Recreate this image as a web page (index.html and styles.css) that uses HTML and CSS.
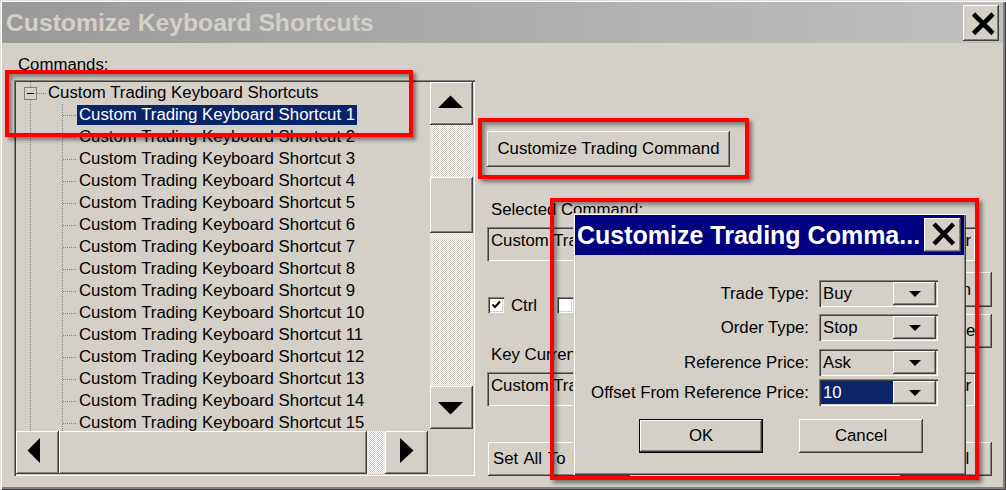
FILE: index.html
```html
<!DOCTYPE html>
<html>
<head>
<meta charset="utf-8">
<title>Customize Keyboard Shortcuts</title>
<link rel="stylesheet" href="styles.css">
</head>
<body>
<div class="window">
  <div class="titlebar">
    <span class="title">Customize Keyboard Shortcuts</span>
    <div class="xbtn main-x"><svg width="36" height="36" viewBox="0 0 36 36"><path d="M10.5 9 L30 28.5 M30 9 L10.5 28.5" stroke="#000" stroke-width="4.6"/></svg></div>
  </div>
  <div class="body">
    <div class="left">
      <div class="lbl cmd-lbl">Commands:</div>
      <div class="tree">
        <div class="tree-view">
          <div class="node root"><span class="exp"><span class="minus"></span></span><span class="hl"></span><span class="txt">Custom Trading Keyboard Shortcuts</span></div>
          <div class="children">
            <div class="node"><span class="hl"></span><span class="txt sel">Custom Trading Keyboard Shortcut 1</span></div>
            <div class="node"><span class="hl"></span><span class="txt">Custom Trading Keyboard Shortcut 2</span></div>
            <div class="node"><span class="hl"></span><span class="txt">Custom Trading Keyboard Shortcut 3</span></div>
            <div class="node"><span class="hl"></span><span class="txt">Custom Trading Keyboard Shortcut 4</span></div>
            <div class="node"><span class="hl"></span><span class="txt">Custom Trading Keyboard Shortcut 5</span></div>
            <div class="node"><span class="hl"></span><span class="txt">Custom Trading Keyboard Shortcut 6</span></div>
            <div class="node"><span class="hl"></span><span class="txt">Custom Trading Keyboard Shortcut 7</span></div>
            <div class="node"><span class="hl"></span><span class="txt">Custom Trading Keyboard Shortcut 8</span></div>
            <div class="node"><span class="hl"></span><span class="txt">Custom Trading Keyboard Shortcut 9</span></div>
            <div class="node"><span class="hl"></span><span class="txt">Custom Trading Keyboard Shortcut 10</span></div>
            <div class="node"><span class="hl"></span><span class="txt">Custom Trading Keyboard Shortcut 11</span></div>
            <div class="node"><span class="hl"></span><span class="txt">Custom Trading Keyboard Shortcut 12</span></div>
            <div class="node"><span class="hl"></span><span class="txt">Custom Trading Keyboard Shortcut 13</span></div>
            <div class="node"><span class="hl"></span><span class="txt">Custom Trading Keyboard Shortcut 14</span></div>
            <div class="node"><span class="hl"></span><span class="txt">Custom Trading Keyboard Shortcut 15</span></div>
          </div>
        </div>
        <div class="vscroll">
          <div class="sbtn"><svg width="43" height="43" viewBox="0 0 43 43"><polygon points="8,26 33,26 20.5,13.5" fill="#000"/></svg></div>
          <div class="track vt1"></div>
          <div class="thumb vthumb"></div>
          <div class="track vt2"></div>
          <div class="sbtn"><svg width="43" height="43" viewBox="0 0 43 43"><polygon points="8,16 33,16 20.5,28.5" fill="#000"/></svg></div>
        </div>
        <div class="hscroll">
          <div class="sbtn"><svg width="43" height="43" viewBox="0 0 43 43"><polygon points="24,7 24,32 11.5,19.5" fill="#000"/></svg></div>
          <div class="thumb hthumb"></div>
          <div class="track ht"></div>
          <div class="sbtn"><svg width="43" height="43" viewBox="0 0 43 43"><polygon points="15,7 15,32 28.5,19.5" fill="#000"/></svg></div>
        </div>
        <div class="corner"></div>
      </div>
    </div>
    <div class="right">
      <div class="btn cmd-btn">Customize Trading Command</div>
      <div class="lbl sel-lbl">Selected Command:</div>
      <div class="textbox"><span>Custom Trading Keyboard Shortcut 1</span><span>Toolbar</span></div>
      <div class="mods">
        <div class="checks">
          <span class="chk"><svg width="12" height="12" viewBox="0 0 12 12"><path d="M2.5 5.5 L5 8 L10 2.5" stroke="#000" stroke-width="2" fill="none"/></svg></span>
          <span class="chk-lbl">Ctrl</span>
          <span class="chk"></span>
          <span class="chk-lbl">Shift</span>
        </div>
        <div class="side-btns">
          <div class="btn side-btn b1">Assign</div>
          <div class="btn side-btn b2">Remove</div>
        </div>
      </div>
      <div class="lbl key-lbl">Key Currently Assigned To:</div>
      <div class="textbox"><span>Custom Trading Keyboard Shortcut 1</span><span>Toolbar</span></div>
      <div class="bottom-row">
        <div class="btn setall">Set All To Default</div>
        <div class="btn side-btn b3">Cancel</div>
      </div>
    </div>
  </div>

  <div class="dialog">
    <div class="dlg-title">
      <span class="dlg-title-text">Customize Trading Comma...</span>
      <div class="xbtn dlg-x"><svg width="37" height="34" viewBox="0 0 37 34"><path d="M10 6 L29.5 26 M29.5 6 L10 26" stroke="#000" stroke-width="4.6"/></svg></div>
    </div>
    <div class="dlg-form">
      <div class="frow r1"><span class="flabel">Trade Type:</span><div class="combo"><span class="cval">Buy</span><span class="cbtn"><svg width="12" height="6" viewBox="0 0 12 6"><polygon points="0,0 12,0 6,6" fill="#000"/></svg></span></div></div>
      <div class="frow r2"><span class="flabel">Order Type:</span><div class="combo"><span class="cval">Stop</span><span class="cbtn"><svg width="12" height="6" viewBox="0 0 12 6"><polygon points="0,0 12,0 6,6" fill="#000"/></svg></span></div></div>
      <div class="frow r3"><span class="flabel">Reference Price:</span><div class="combo"><span class="cval">Ask</span><span class="cbtn"><svg width="12" height="6" viewBox="0 0 12 6"><polygon points="0,0 12,0 6,6" fill="#000"/></svg></span></div></div>
      <div class="frow r4"><span class="flabel">Offset From Reference Price:</span><div class="combo"><span class="cval selv">10</span><span class="cbtn"><svg width="12" height="6" viewBox="0 0 12 6"><polygon points="0,0 12,0 6,6" fill="#000"/></svg></span></div></div>
    </div>
    <div class="dlg-btns">
      <div class="btn dbtn ok">OK</div>
      <div class="btn dbtn">Cancel</div>
    </div>
  </div>

  <div class="mark mark-tree"></div>
  <div class="mark mark-btn"></div>
  <div class="mark mark-dlg"></div>
</div>
</body>
</html>
```

FILE: styles.css
```css
* { box-sizing: border-box; margin: 0; padding: 0; }
html, body { width: 1006px; height: 490px; overflow: hidden; background: #d4d0c8; }
body {
  font-family: "Liberation Sans", Arial, sans-serif;
  font-size: 16.8px;
  color: #000;
}

.window {
  position: relative;
  width: 1006px;
  height: 490px;
  padding: 2px 3px 3px 2px;
  background: #d4d0c8;
  box-shadow: inset 1px 1px #e4e2dc, inset 2px 2px #ffffff, inset -1px -1px #404040, inset -3px -3px #808080;
  display: flex;
  flex-direction: column;
}

/* title bar */
.titlebar {
  height: 41px;
  flex: none;
  display: flex;
  align-items: center;
  justify-content: space-between;
  padding: 0 4px 0 4px;
  background: linear-gradient(to right, #999999, #c0c0c0);
}
.title {
  font-weight: bold;
  font-size: 24.7px;
  color: #d4d0c8;
  white-space: nowrap;
}
.xbtn {
  background: #d4d0c8;
  box-shadow: inset -1px -1px #404040, inset 1px 1px #ffffff, inset -2px -2px #808080;
  display: flex;
  align-items: center;
  justify-content: center;
}
.xbtn svg { display: block; }
.main-x { width: 36px; height: 36px; margin-top: 1px; }

/* body */
.body { display: flex; flex: 1; }
.left { padding-left: 12px; flex: none; }
.lbl { line-height: 19px; height: 19px; padding-left: 4px; white-space: nowrap; }
.cmd-lbl { margin-top: 12px; }

.tree {
  margin-top: 6px;
  width: 461px;
  height: 396px;
  padding: 2px;
  box-shadow: inset 1px 1px #808080, inset 2px 2px #404040, inset -1px -1px #ffffff, inset -2px -2px #d4d0c8;
  display: grid;
  grid-template-columns: 414px 43px;
  grid-template-rows: 349px 43px;
}
.tree-view {
  overflow: hidden;
  background-image:
    repeating-linear-gradient(to bottom, #808080 0 1px, transparent 1px 2px),
    repeating-linear-gradient(to bottom, #808080 0 1px, transparent 1px 2px);
  background-size: 1px 100%, 1px 100%;
  background-position: 14px 0, 46px 22px;
  background-repeat: no-repeat;
}
.node {
  display: flex;
  align-items: center;
  height: 22px;
  white-space: nowrap;
}
.root { padding-left: 8px; }
.exp {
  width: 13px;
  height: 13px;
  border: 1px solid #808080;
  background: #d4d0c8;
  display: flex;
  align-items: center;
  justify-content: center;
  flex: none;
}
.minus { width: 7px; height: 1px; background: #000; }
.hl {
  height: 1px;
  width: 9px;
  flex: none;
  background: repeating-linear-gradient(to right, #808080 0 1px, transparent 1px 2px);
}
.children .node { padding-left: 47px; }
.children .hl { width: 14px; }
.txt { padding: 0 2px; line-height: 20px; height: 20px; }
.txt.sel { background: #0a246a; color: #fff; }

.vscroll { display: flex; flex-direction: column; padding-bottom: 2px; }
.hscroll { display: flex; padding-right: 2px; }
.corner { background: #d4d0c8; }
.sbtn {
  width: 43px;
  height: 43px;
  flex: none;
  background: #d4d0c8;
  box-shadow: inset -1px -1px #404040, inset 1px 1px #ffffff, inset -2px -2px #808080;
}
.sbtn svg { display: block; }
.track {
  background: repeating-conic-gradient(#d4d0c8 0 25%, #ffffff 0 50%) 0 0 / 2px 2px;
}
.thumb {
  background: #d4d0c8;
  box-shadow: inset -1px -1px #404040, inset 1px 1px #ffffff, inset -2px -2px #808080;
}
.vt1 { height: 52px; }
.vthumb { height: 56px; }
.vt2 { flex: 1; }
.hthumb { flex: 1; }
.ht { width: 18px; flex: none; }

/* right side */
.right { margin-left: 12px; width: 505px; display: flex; flex-direction: column; align-items: flex-start; }
.btn {
  background: #d4d0c8;
  box-shadow: inset -1px -1px #404040, inset 1px 1px #ffffff, inset -2px -2px #808080;
  display: flex;
  align-items: center;
  justify-content: center;
  white-space: nowrap;
}
.cmd-btn { margin-top: 88px; width: 243px; height: 36px; }
.sel-lbl { margin-top: 33px; }
.textbox {
  margin-top: 8px;
  width: 488px;
  height: 34px;
  padding: 4px 4px 0 4px;
  line-height: 19px;
  box-shadow: inset 1px 1px #808080, inset 2px 2px #404040, inset -1px -1px #ffffff, inset -2px -2px #d4d0c8;
  display: flex;
  justify-content: space-between;
  align-items: flex-start;
  white-space: nowrap;
  overflow: hidden;
}
.mods { margin-top: 11px; width: 505px; display: flex; justify-content: space-between; align-items: flex-start; }
.checks { margin-top: 25px; padding-left: 1px; display: flex; align-items: center; height: 16px; }
.chk {
  width: 16px;
  height: 16px;
  background: #ffffff;
  box-shadow: inset 1px 1px #808080, inset 2px 2px #404040, inset -1px -1px #ffffff, inset -2px -2px #d4d0c8;
  display: flex;
  align-items: center;
  justify-content: center;
}
.chk svg { display: block; }
.chk-lbl { margin-left: 7px; margin-right: 20px; line-height: 19px; }
.side-btns { display: flex; flex-direction: column; gap: 7px; }
.side-btn { width: 92px; }
.b1 { height: 35px; }
.b2 { height: 34px; padding-right: 4px; }
.key-lbl { margin-top: -3px; }
.bottom-row { margin-top: 36px; width: 505px; display: flex; justify-content: space-between; height: 34px; }
.setall { margin-left: 1px; padding: 0 5px 0 5px; height: 34px; word-spacing: 1.5px; }
.b3 { height: 34px; padding-right: 6px; }

/* dialog */
.dialog {
  position: absolute;
  left: 573px;
  top: 213px;
  width: 393px;
  height: 262px;
  padding: 2px;
  background: #d4d0c8;
  box-shadow: inset 1px 1px #d4d0c8, inset 2px 2px #ffffff, inset -1px -1px #404040, inset -2px -2px #808080;
  display: flex;
  flex-direction: column;
}
.dlg-title {
  height: 40px;
  flex: none;
  background: #000080;
  display: flex;
  align-items: center;
  justify-content: space-between;
  padding: 0 3px 0 2px;
}
.dlg-title-text { color: #fff; font-weight: bold; font-size: 25px; white-space: nowrap; }
.dlg-x { width: 37px; height: 34px; }
.dlg-form { padding-top: 25px; padding-right: 26px; display: flex; flex-direction: column; }
.frow { display: flex; justify-content: flex-end; align-items: center; height: 27px; }
.r2 { margin-top: 7px; }
.r3 { margin-top: 8px; }
.r4 { margin-top: 3px; }
.flabel { margin-right: 10px; white-space: nowrap; }
.combo {
  width: 119px;
  height: 27px;
  padding: 2px;
  box-shadow: inset 1px 1px #808080, inset 2px 2px #404040, inset -1px -1px #ffffff, inset -2px -2px #d4d0c8;
  display: flex;
}
.cval { flex: 1; padding-left: 2px; line-height: 23px; }
.cval.selv { background: #0a246a; color: #fff; }
.cbtn {
  width: 43px;
  flex: none;
  background: #d4d0c8;
  box-shadow: inset -1px -1px #404040, inset 1px 1px #ffffff, inset -2px -2px #808080;
  display: flex;
  align-items: center;
  justify-content: center;
}
.cbtn svg { display: block; }
.dlg-btns { margin-top: 13px; padding-left: 64px; display: flex; gap: 36px; }
.dbtn { width: 124px; height: 34px; }
.ok { box-shadow: inset 0 0 0 1px #000, inset -2px -2px #404040, inset 2px 2px #ffffff, inset -3px -3px #808080; }

/* red highlight marks */
.mark {
  position: absolute;
  border: 4px solid #ff0000;
  box-shadow: 3px 3px 4px rgba(0, 0, 0, 0.45), inset 3px 3px 4px rgba(0, 0, 0, 0.4);
  pointer-events: none;
}
.mark-tree { left: 5px; top: 70px; width: 408px; height: 67px; }
.mark-btn { left: 478px; top: 118px; width: 271px; height: 61px; }
.mark-dlg { left: 550px; top: 198px; width: 429px; height: 282px; }
```
